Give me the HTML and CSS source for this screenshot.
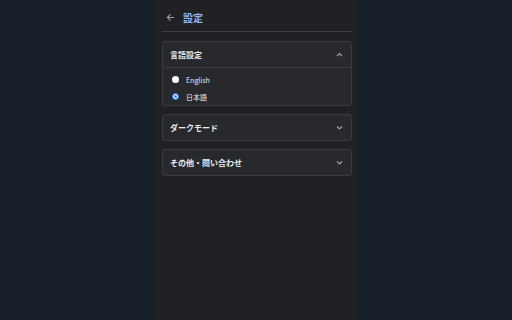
FILE: index.html
```html
<!DOCTYPE html>
<html lang="ja">
<head>
  <meta charset="UTF-8">
  <meta name="viewport" content="width=device-width, initial-scale=1.0">
  <title>設定</title>
  <link rel="stylesheet" href="styles.css">
</head>
<body>
  <div class="panel">
    <div class="topbar">
      <svg class="back" width="9" height="9" viewBox="0 0 10 10">
        <path d="M9 5H1.5M5 1.5L1.5 5L5 8.5" fill="none" stroke="#9aa0a6" stroke-width="1.3"/>
      </svg>
      <span class="title">設定</span>
    </div>

    <div class="card">
      <div class="card-head open">
        <span>言語設定</span>
        <svg class="chev" width="7" height="5" viewBox="0 0 7 5"><path d="M1 4L3.5 1.5L6 4" fill="none" stroke="#9aa0a6" stroke-width="1.2"/></svg>
      </div>
      <div class="card-body">
        <label class="radio-row">
          <span class="radio"></span>
          <span>English</span>
        </label>
        <label class="radio-row">
          <span class="radio checked"></span>
          <span>日本語</span>
        </label>
      </div>
    </div>

    <div class="card">
      <div class="card-head">
        <span>ダークモード</span>
        <svg class="chev" width="7" height="5" viewBox="0 0 7 5"><path d="M1 1.5L3.5 4L6 1.5" fill="none" stroke="#9aa0a6" stroke-width="1.2"/></svg>
      </div>
    </div>

    <div class="card">
      <div class="card-head">
        <span>その他・問い合わせ</span>
        <svg class="chev" width="7" height="5" viewBox="0 0 7 5"><path d="M1 1.5L3.5 4L6 1.5" fill="none" stroke="#9aa0a6" stroke-width="1.2"/></svg>
      </div>
    </div>
  </div>
</body>
</html>
```

FILE: styles.css
```css
body { margin: 0; background-color: #17202a; font-family: "Noto Sans CJK JP", "Noto Sans", sans-serif; color: #e8eaed; }
.panel { width: 204px; min-height: 320px; margin: 0 auto; padding: 0 6px 0 8px; background-color: #202124; box-sizing: border-box; }
.topbar { height: 32px; display: flex; align-items: center; padding: 4px 0 0 4px; border-bottom: 1px solid #3c4043; box-sizing: border-box; }
.back { margin-right: 8px; }
.title { color: #8ab4f8; font-size: 10px; font-weight: bold; }
.card { margin-top: 8px; background-color: #28292c; border: 1px solid #3a3b3e; border-radius: 3px; }
.topbar + .card { margin-top: 9px; }
.card-head { height: 25px; display: flex; align-items: center; justify-content: space-between; padding: 0 8px 0 7px; font-size: 8px; font-weight: bold; }
.card-head.open { border-bottom: 1px solid #3a3b3e; }
.card-body { padding: 3px 0 0 9px; }
.radio-row { display: flex; align-items: center; height: 17px; font-size: 7px; color: #e8eaed; }
.radio { width: 7px; height: 7px; border-radius: 50%; background-color: #fff; margin-right: 7px; box-sizing: border-box; }
.radio.checked { background-color: #3b82f6; border: 1.5px solid #3b82f6; box-shadow: inset 0 0 0 1px #fff; }
```
